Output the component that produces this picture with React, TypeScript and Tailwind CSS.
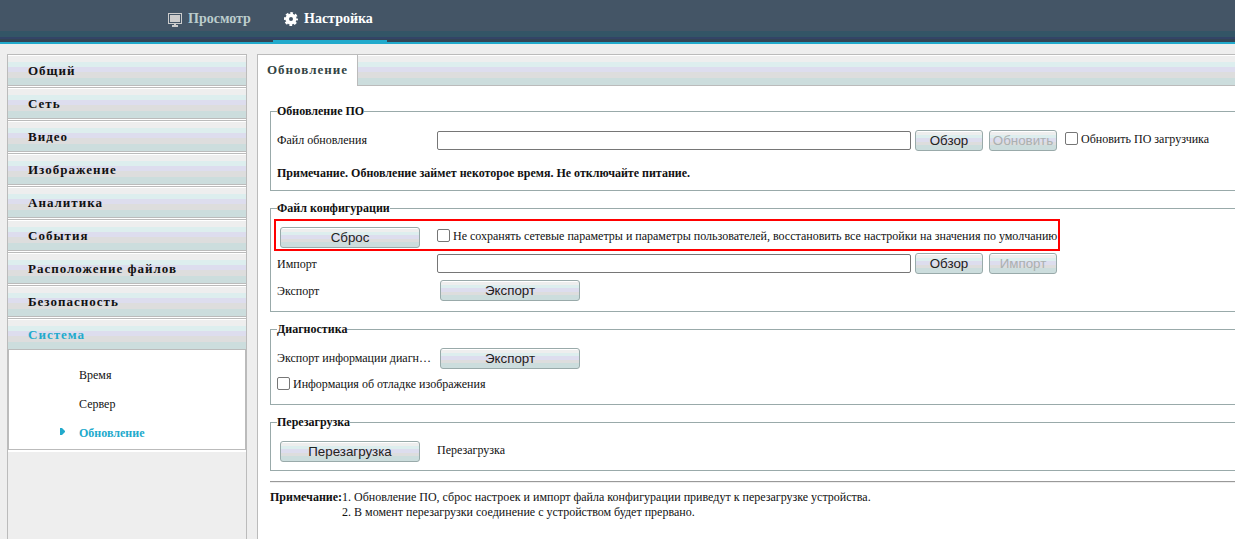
import type { ReactNode } from 'react'

// ---------------------------------------------------------------------------
// Data
// ---------------------------------------------------------------------------

const MENU = [
  'Общий',
  'Сеть',
  'Видео',
  'Изображение',
  'Аналитика',
  'События',
  'Расположение файлов',
  'Безопасность',
  'Система',
]

const SUBMENU = ['Время', 'Сервер', 'Обновление']

const BAR =
  'bg-[linear-gradient(#fff_0_1px,#eee_1px_7px,#dee_7px_12px,#dde_12px_17px,#ddd_17px_23px,#cdd_23px)]'

// ---------------------------------------------------------------------------
// Icons
// ---------------------------------------------------------------------------

function MonitorIcon() {
  return (
    <svg width="14" height="14" viewBox="0 0 14 14" fill="#ccc" shapeRendering="crispEdges">
      <path d="M0 0h14v11H0zM1 1v9h12V1z" fillRule="evenodd" />
      <path d="M2 2h10v7H2zM6 11h2v1h2v2H4v-2h2z" />
    </svg>
  )
}

function GearIcon() {
  return (
    <svg width="14" height="14" viewBox="0 0 14 14" fill="none" stroke="#fff">
      <circle cx="7" cy="7" r="3.8" strokeWidth="3.6" />
      <circle cx="7" cy="7" r="6" strokeWidth="2" strokeDasharray="2.7 2.012" strokeDashoffset="1.35" />
    </svg>
  )
}

// ---------------------------------------------------------------------------
// Form parts
// ---------------------------------------------------------------------------

interface ButtonProps {
  children: ReactNode
  wide?: boolean
  disabled?: boolean
}

function Button({ children, wide, disabled }: ButtonProps) {
  return (
    <button
      disabled={disabled}
      className={`h-[21px] shrink-0 rounded-[3px] border border-[#9aa] bg-[linear-gradient(#fff_0_1px,#eee_1px_4px,#dee_4px_7px,#dde_7px_11px,#ddd_11px_14px,#cdd_14px)] text-center font-['Liberation_Sans',sans-serif] text-[13.33px] leading-[19px] whitespace-nowrap ${
        wide ? 'w-[140px]' : 'w-[68px]'
      } ${disabled ? 'text-[#aab0b0]' : 'text-[#222]'}`}
    >
      {children}
    </button>
  )
}

function Checkbox({ label }: { label: string }) {
  return (
    <label className="flex h-[15px] items-center gap-[3px] whitespace-nowrap">
      <input
        type="checkbox"
        className="size-[13px] shrink-0 appearance-none rounded-[2px] border border-[#767676] bg-white"
      />
      <span className="pt-0.5">{label}</span>
    </label>
  )
}

function TextInput() {
  return (
    <input
      type="text"
      className="h-[19px] w-[474px] shrink-0 rounded-[2px] border border-[#767676] bg-white px-1"
    />
  )
}

function Section({ title, height, children }: { title: string; height: string; children: ReactNode }) {
  return (
    <fieldset className={`w-[1000px] border border-[#9aa] pl-1.5 ${height}`}>
      <legend className="h-[15px] font-bold">{title}</legend>
      {children}
    </fieldset>
  )
}

// ---------------------------------------------------------------------------
// Page
// ---------------------------------------------------------------------------

function Header() {
  return (
    <header className="flex h-11 shrink-0 border-b-2 border-[#2ac] bg-[linear-gradient(#456_0_31px,#356_31px_37px,#346_37px_39px,#345_39px)] pl-[158px] text-[14px] font-bold">
      <div className="flex w-[115px] gap-1.5 pt-[13px] pl-2.5 leading-[11px] text-[#bcc]">
        <MonitorIcon />
        <span>Просмотр</span>
      </div>
      <div className="flex h-[42px] w-[114px] gap-1.5 border-b-2 border-[#2ac] pt-3 pl-[11px] leading-[13px] text-white">
        <GearIcon />
        <span>Настройка</span>
      </div>
    </header>
  )
}

function Sidebar() {
  return (
    <nav className="w-60 shrink-0 border-x border-[#bbb]">
      {MENU.map((item, i) => (
        <div
          key={item}
          className={`h-8 border-y border-[#bbb] pl-5 text-[13px] leading-8 font-bold tracking-[1px] ${BAR} ${
            i === MENU.length - 1 ? 'text-[#2ac]' : 'mb-px shadow-[0_1px_0_#fff]'
          }`}
        >
          {item}
        </div>
      ))}
      <ul className="h-[100px] border-x border-b border-[#bbb] bg-white pt-[11px] shadow-[0_2px_0_#fff]">
        {SUBMENU.map((item) => (
          <li
            key={item}
            className={`flex h-[29px] items-center ${
              item === 'Обновление' ? 'font-bold text-[#2ac]' : ''
            }`}
          >
            <span className="flex w-[70px] pl-[51px]">
              {item === 'Обновление' && (
                <svg width="5" height="7" viewBox="0 0 5 7" fill="#2ac" className="-mt-1">
                  <path d="M0 0h2L5 3v1L2 7H0z" />
                </svg>
              )}
            </span>
            {item}
          </li>
        ))}
      </ul>
    </nav>
  )
}

export default function App() {
  return (
    <div className="flex h-[539px] w-[1235px] flex-col overflow-hidden bg-[#eee] font-['Liberation_Serif',serif] text-[12px] leading-[15px] text-[#111]">
      <Header />
      <div className="flex min-h-0 flex-1 gap-2.5 pt-2.5 pl-[7px]">
        <Sidebar />
        <main className="flex-1 overflow-hidden border-l border-[#bbb] bg-white">
          <div className="flex h-8">
            <div className="w-[100px] shrink-0 border-t border-r border-[#bbb] pl-[9px] text-[13px] leading-[30px] font-bold tracking-[1px] text-[#344]">
              Обновление
            </div>
            <div className={`flex-1 border-y border-[#bbb] ${BAR}`} />
          </div>

          <div className="flex flex-col gap-2.5 pt-[18px] pl-3">
            <Section title="Обновление ПО" height="h-[87px]">
              <div className="mt-[11px] flex h-[21px] items-center">
                <span className="w-40 shrink-0">Файл обновления</span>
                <TextInput />
                <div className="ml-1 flex gap-1.5">
                  <Button>Обзор</Button>
                  <Button disabled>Обновить</Button>
                </div>
                <div className="mb-1 ml-2">
                  <Checkbox label="Обновить ПО загрузчика" />
                </div>
              </div>
              <p className="mt-[15px] font-bold">
                Примечание. Обновление займет некоторое время. Не отключайте питание.
              </p>
            </Section>

            <Section title="Файл конфигурации" height="h-[111px]">
              <div className="relative mt-[11px] flex h-[21px] items-center pl-[3px]">
                <div className="absolute -top-2 -left-[3px] h-8 w-[786px] border-2 border-[#f00]" />
                <Button wide>Сброс</Button>
                <div className="mb-1 ml-[17px]">
                  <Checkbox label="Не сохранять сетевые параметры и параметры пользователей, восстановить все настройки на значения по умолчанию" />
                </div>
              </div>
              <div className="mt-[5px] flex h-[21px] items-center">
                <span className="w-40 shrink-0 pt-0.5">Импорт</span>
                <TextInput />
                <div className="ml-1 flex gap-1.5">
                  <Button>Обзор</Button>
                  <Button disabled>Импорт</Button>
                </div>
              </div>
              <div className="mt-1.5 flex h-[21px] items-center">
                <span className="w-[163px] shrink-0 pt-px">Экспорт</span>
                <Button wide>Экспорт</Button>
              </div>
            </Section>

            <Section title="Диагностика" height="h-[83px]">
              <div className="mt-[11px] flex h-[21px] items-center">
                <span className="w-[163px] shrink-0 whitespace-nowrap">Экспорт информации диагн…</span>
                <Button wide>Экспорт</Button>
              </div>
              <div className="mt-[7px]">
                <Checkbox label="Информация об отладке изображения" />
              </div>
            </Section>

            <Section title="Перезагрузка" height="h-14">
              <div className="mt-[11px] flex h-[21px] items-center pl-[3px]">
                <Button wide>Перезагрузка</Button>
                <span className="mb-0.5 ml-[17px]">Перезагрузка</span>
              </div>
            </Section>

            <div className="flex w-[1000px] border-t border-[#999] pt-2 shadow-[inset_0_1px_0_#eee]">
              <b>Примечание:</b>
              <div>
                <p>1. Обновление ПО, сброс настроек и импорт файла конфигурации приведут к перезагрузке устройства.</p>
                <p>2. В момент перезагрузки соединение с устройством будет прервано.</p>
              </div>
            </div>
          </div>
        </main>
      </div>
    </div>
  )
}
